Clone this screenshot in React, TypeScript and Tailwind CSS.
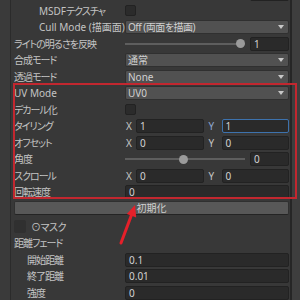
import React from 'react';

const FONT = "[font-family:'Noto_Sans','Noto_Sans_CJK_JP',sans-serif] [font-feature-settings:'palt']";

// jp labels run narrower in the original (proportional kana)
const Row: React.FC<{ label?: React.ReactNode; indent?: string; latin?: boolean; children?: React.ReactNode }> = ({
  label,
  indent = '',
  latin,
  children,
}) => (
  <div className="h-[16.5px] flex items-center">
    <div
      className={`w-[111px] shrink-0 overflow-hidden whitespace-nowrap leading-[16px] ${latin ? '' : 'tracking-[-1px]'} ${indent}`}
    >
      {label}
    </div>
    <div className="flex-1 min-w-0 flex items-center">{children}</div>
  </div>
);

const Field: React.FC<{ value: string; focused?: boolean; className?: string }> = ({ value, focused, className = 'flex-1' }) => (
  <div
    className={`h-[14px] rounded-[2px] bg-[#2a2a2a] border flex items-center pl-[3px] text-[#d2d2d2] leading-[12px] ${
      focused ? 'border-[#3d72ad]' : 'border-[#222222]'
    } ${className}`}
  >
    {value}
  </div>
);

const Dropdown: React.FC<{ value: string; tight?: boolean }> = ({ value, tight }) => (
  <div className="flex-1 h-[14px] rounded-[2px] bg-[#515151] border border-[#303030] flex items-center pl-[2px] pr-[4px] text-[#d0d0d0]">
    <span className={`flex-1 whitespace-nowrap leading-[12px] ${tight ? 'tracking-[-0.5px]' : ''}`}>{value}</span>
    <svg width="6" height="4" viewBox="0 0 6 4">
      <polygon points="0,0 6,0 3,4" fill="#c8c8c8" />
    </svg>
  </div>
);

const Checkbox = () => <div className="w-[11px] h-[11px] rounded-[2px] bg-[#2b2b2b] border border-[#222222]" />;

const Slider: React.FC<{ value: string; knob: string }> = ({ value, knob }) => (
  <>
    <div className="flex-1 relative h-[14px] flex items-center mr-[5px]">
      <div className="w-full h-[2px] bg-[#5e5e5e]" />
      <div className={`absolute top-[2.5px] w-[9px] h-[9px] rounded-full bg-[#9a9a9a] ${knob}`} />
    </div>
    <Field value={value} className="w-[39px]" />
  </>
);

const XY: React.FC<{ x: string; y: string; focusY?: boolean }> = ({ x, y, focusY }) => (
  <>
    <span className="w-[11px] shrink-0 pl-[1px] leading-[12px]">X</span>
    <Field value={x} />
    <span className={`w-[18px] shrink-0 pl-[5px] leading-[12px] ${focusY ? 'text-[#8ea6d2]' : ''}`}>Y</span>
    <Field value={y} focused={focusY} />
  </>
);

export default function App() {
  return (
    <div className={`w-[300px] h-[300px] overflow-hidden bg-[#383838] flex relative text-[10px] text-[#c4c4c4] ${FONT}`}>
      <div className="w-[11px] shrink-0 bg-[#3a3a3a] border-r border-[#2b2b2b]" />

      <div className="flex-1 min-w-0 pl-[3px] pr-[1px] mt-[-14.25px]">
        <Row>
          <div className="flex-1" />
          <Field value="" className="w-[39px]" />
        </Row>
        <Row
          label={
            <>
              <span className="tracking-normal">MSDF</span>テクスチャ
            </>
          }
          indent="pl-[25px]"
        >
          <Checkbox />
        </Row>
        <Row label="Cull Mode (描画面)" indent="pl-[25px]" latin>
          <Dropdown value="Off (両面を描画)" tight />
        </Row>
        <Row label="ライトの明るさを反映">
          <Slider value="1" knob="left-[111px]" />
        </Row>
        <Row label="合成モード">
          <Dropdown value="通常" />
        </Row>
        <Row label="透過モード">
          <Dropdown value="None" />
        </Row>
        <Row label="UV Mode" latin>
          <Dropdown value="UV0" />
        </Row>
        <Row label="デカール化">
          <Checkbox />
        </Row>
        <Row label="タイリング">
          <XY x="1" y="1" focusY />
        </Row>
        <Row label="オフセット">
          <XY x="0" y="0" />
        </Row>
        <Row label="角度">
          <Slider value="0" knob="left-[54px]" />
        </Row>
        <Row label="スクロール">
          <XY x="0" y="0" />
        </Row>
        <Row label="回転速度">
          <Field value="0" />
        </Row>

        <button className="mt-[1px] mb-[3px] w-full h-[14px] rounded-[2px] bg-[#585858] border border-[#303030] border-b-[#242424] text-[#d0d0d0] leading-[12px] flex items-center justify-center">
          初期化
        </button>

        <div className="h-[16.5px] flex items-center">
          <div className="w-[12px] h-[13px] rounded-[2px] bg-[#303030]" />
          <span className="ml-[5px] leading-[16px] whitespace-nowrap tracking-[-0.5px]">⊙マスク</span>
        </div>
        <Row label="距離フェード" />
        <Row label="開始距離" indent="pl-[13px]">
          <Field value="0.1" />
        </Row>
        <Row label="終了距離" indent="pl-[13px]">
          <Field value="0.01" />
        </Row>
        <Row label="強度" indent="pl-[13px]">
          <Field value="0" />
        </Row>
      </div>

      <div className="w-[10px] shrink-0 bg-[#3e3e3e] border-l-2 border-[#262626]" />

      {/* annotation */}
      <div className="absolute left-[13px] top-[83px] w-[284px] h-[116px] border-2 border-[#c2272f] pointer-events-none" />
      <svg className="absolute left-[110px] top-[200px] pointer-events-none" width="35" height="46" viewBox="0 0 35 46">
        <line x1="11" y1="43" x2="21.5" y2="15" stroke="#e5202a" strokeWidth="3" strokeLinecap="round" />
        <polygon points="25,5 26.2,17.5 16.8,14" fill="#e5202a" />
      </svg>
    </div>
  );
}
